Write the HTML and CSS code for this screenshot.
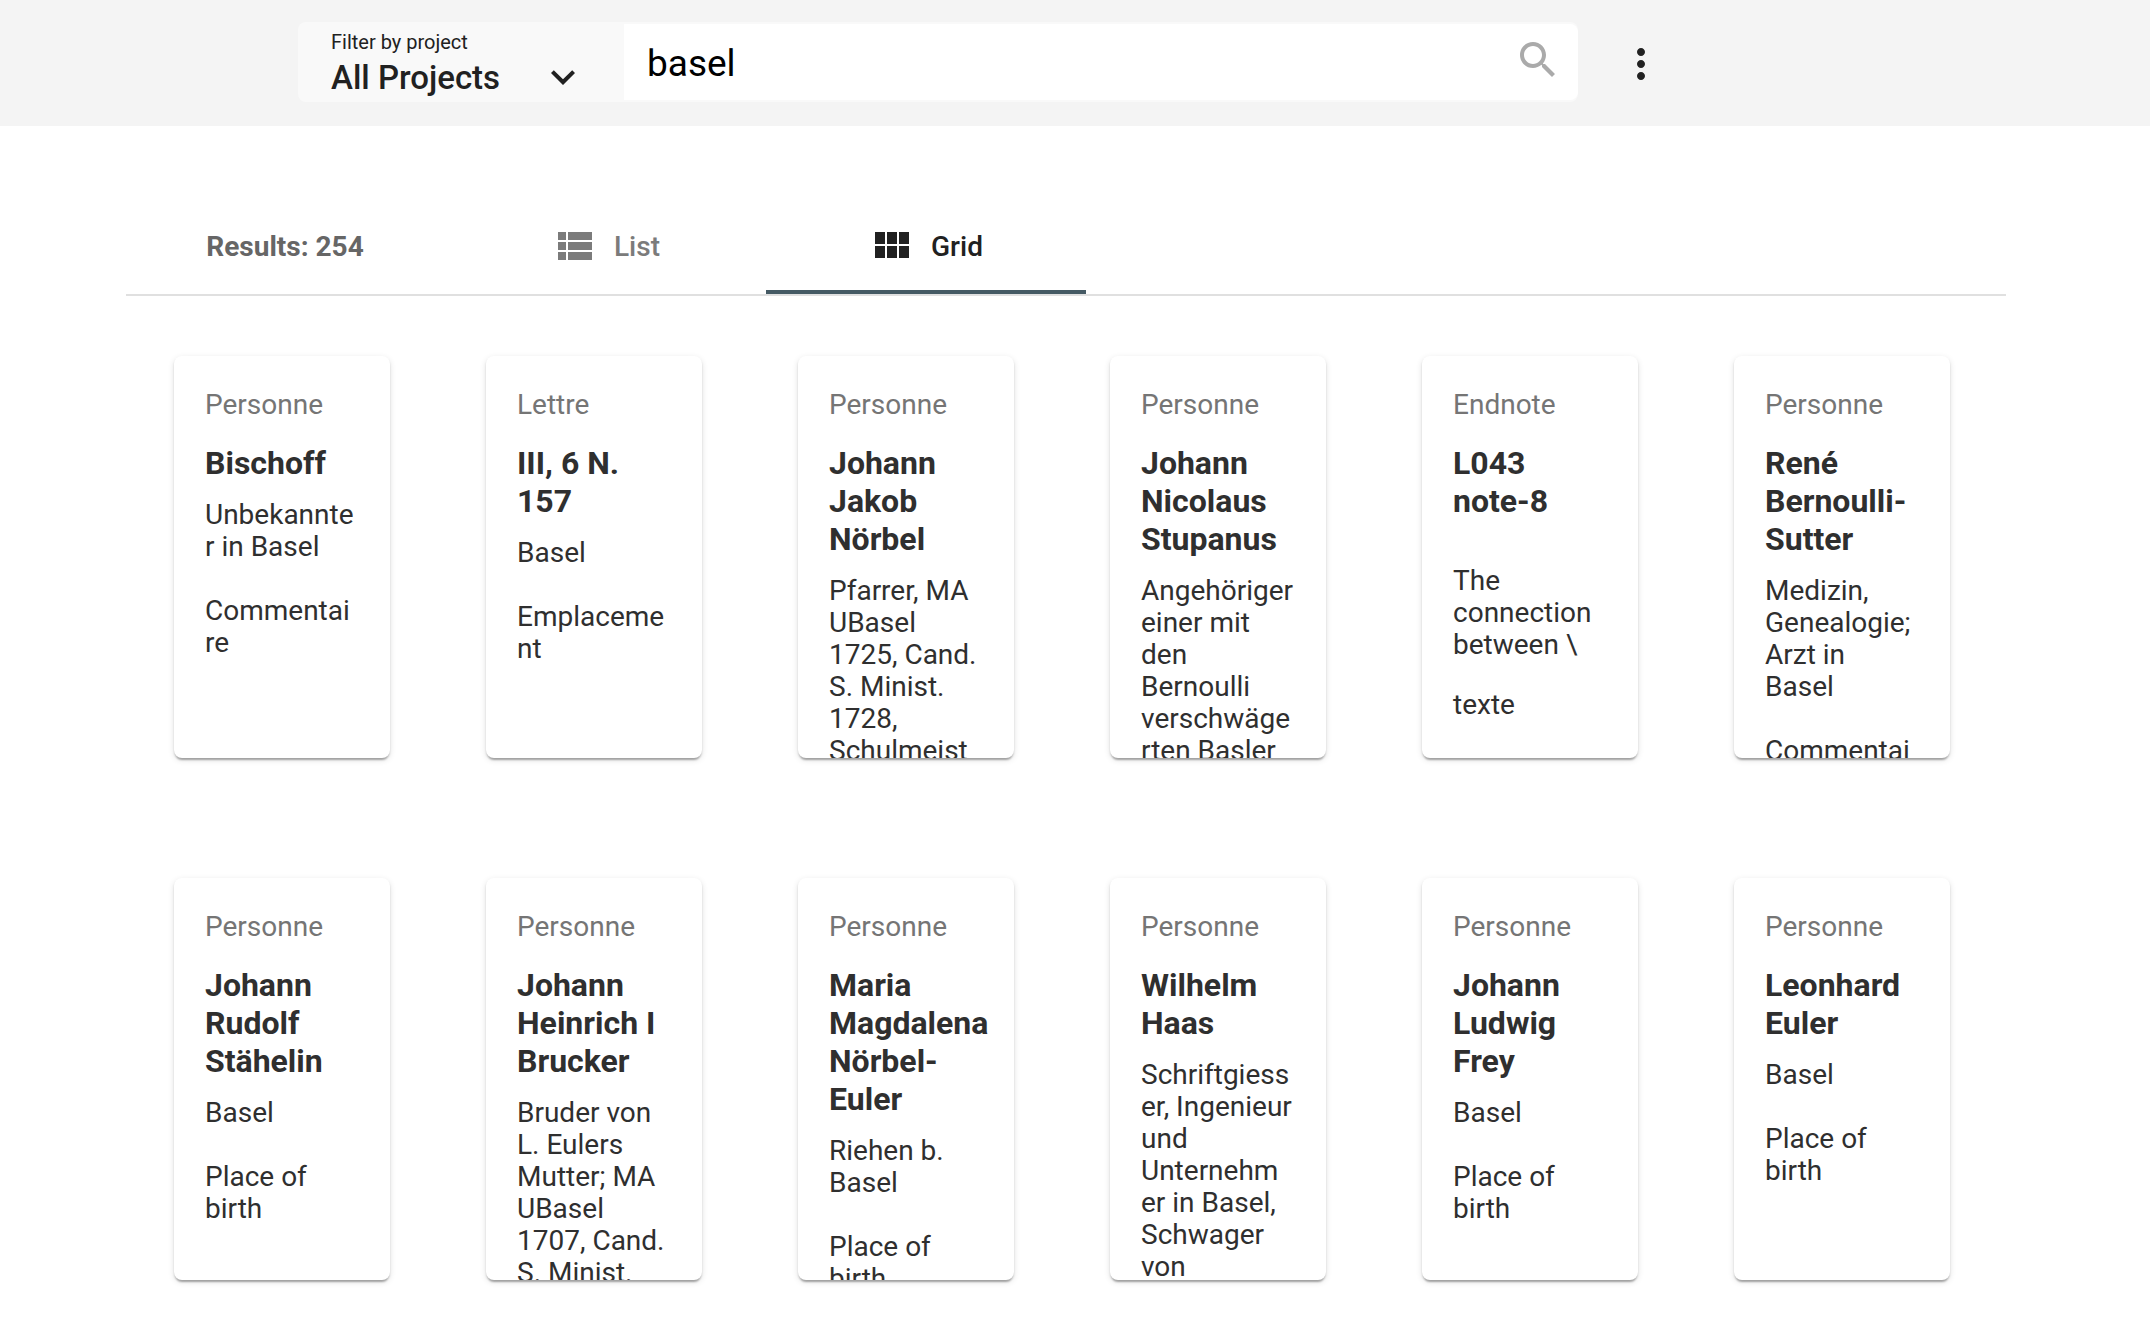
FILE: index.html
```html
<!DOCTYPE html>
<html lang="en">
<head>
<meta charset="utf-8">
<title>Search results</title>
<link rel="stylesheet" href="styles.css">
</head>
<body>
<header class="topbar">
  <form class="search" role="search">
    <div class="filter">
      <label class="filter-label" for="project">Filter by project</label>
      <div class="filter-row">
        <select class="filter-select" id="project"><option>All Projects</option></select>
        <svg class="icon filter-arrow" viewBox="0 0 24 24" aria-hidden="true"><path d="M7.41 8.59L12 13.17l4.59-4.58L18 10l-6 6-6-6z"/></svg>
      </div>
    </div>
    <div class="field">
      <input class="field-input" type="text" value="basel" aria-label="Search">
      <button class="icon-button field-button" type="button" aria-label="Search">
        <svg class="icon" viewBox="0 0 24 24" aria-hidden="true"><path d="M15.5 14h-.79l-.28-.27C15.41 12.59 16 11.11 16 9.5 16 5.91 13.09 3 9.5 3S3 5.91 3 9.5 5.91 16 9.5 16c1.61 0 3.09-.59 4.23-1.57l.27.28v.79l5 4.99L20.49 19l-4.99-5zm-6 0C7.01 14 5 11.99 5 9.5S7.01 5 9.5 5 14 7.01 14 9.5 11.99 14 9.5 14z"/></svg>
      </button>
    </div>
  </form>
  <button class="icon-button menu-button" type="button" aria-label="More options">
    <svg class="icon" viewBox="0 0 24 24" aria-hidden="true"><path d="M12 8c1.1 0 2-.9 2-2s-.9-2-2-2-2 .9-2 2 .9 2 2 2zm0 2c-1.1 0-2 .9-2 2s.9 2 2 2 2-.9 2-2-.9-2-2-2zm0 6c-1.1 0-2 .9-2 2s.9 2 2 2 2-.9 2-2-.9-2-2-2z"/></svg>
  </button>
</header>
<main class="results">
  <div class="tabs" role="tablist">
    <button class="tab tab-count" type="button" role="tab" disabled><span class="tab-label">Results: 254</span></button>
    <button class="tab" type="button" role="tab">
      <svg class="icon" viewBox="0 0 24 24" aria-hidden="true"><path d="M4 14h4v-4H4v4zm0 5h4v-4H4v4zM4 9h4V5H4v4zm5 5h12v-4H9v4zm0 5h12v-4H9v4zM9 5v4h12V5H9z"/></svg>
      <span class="tab-label">List</span>
    </button>
    <button class="tab tab-active" type="button" role="tab" aria-selected="true">
      <svg class="icon" viewBox="0 0 24 24" aria-hidden="true"><path d="M4 11h5V5H4v6zm0 7h5v-6H4v6zm6 0h5v-6h-5v6zm6 0h5v-6h-5v6zm-6-7h5V5h-5v6zm6-6v6h5V5h-5z"/></svg>
      <span class="tab-label">Grid</span>
    </button>
  </div>
  <section class="cards">
    <article class="card">
      <p class="card-type">Personne</p>
      <h2 class="card-title">Bischoff</h2>
      <div class="card-body">Unbekannter in Basel<br><br>Commentaire</div>
    </article>
    <article class="card">
      <p class="card-type">Lettre</p>
      <h2 class="card-title">III, 6 N. 157</h2>
      <div class="card-body">Basel<br><br>Emplacement</div>
    </article>
    <article class="card">
      <p class="card-type">Personne</p>
      <h2 class="card-title">Johann Jakob Nörbel</h2>
      <div class="card-body">Pfarrer, MA UBasel 1725, Cand. S. Minist. 1728, Schulmeister</div>
    </article>
    <article class="card">
      <p class="card-type">Personne</p>
      <h2 class="card-title">Johann Nicolaus Stupanus</h2>
      <div class="card-body">Angehöriger einer mit den Bernoulli verschwägerten Basler</div>
    </article>
    <article class="card">
      <p class="card-type">Endnote</p>
      <h2 class="card-title">L043 note-8</h2>
      <div class="card-body"><p class="card-quote">The connection between \</p>texte</div>
    </article>
    <article class="card">
      <p class="card-type">Personne</p>
      <h2 class="card-title">René Bernoulli-Sutter</h2>
      <div class="card-body">Medizin, Genealogie; Arzt in Basel<br><br>Commentaire</div>
    </article>
    <article class="card">
      <p class="card-type">Personne</p>
      <h2 class="card-title">Johann Rudolf Stähelin</h2>
      <div class="card-body">Basel<br><br>Place of birth</div>
    </article>
    <article class="card">
      <p class="card-type">Personne</p>
      <h2 class="card-title">Johann Heinrich I Brucker</h2>
      <div class="card-body">Bruder von L. Eulers Mutter; MA UBasel 1707, Cand. S. Minist.</div>
    </article>
    <article class="card">
      <p class="card-type">Personne</p>
      <h2 class="card-title">Maria Magdalena Nörbel-Euler</h2>
      <div class="card-body">Riehen b. Basel<br><br>Place of birth</div>
    </article>
    <article class="card">
      <p class="card-type">Personne</p>
      <h2 class="card-title">Wilhelm Haas</h2>
      <div class="card-body">Schriftgiesser, Ingenieur und Unternehm<wbr>er in Basel, Schwager von</div>
    </article>
    <article class="card">
      <p class="card-type">Personne</p>
      <h2 class="card-title">Johann Ludwig Frey</h2>
      <div class="card-body">Basel<br><br>Place of birth</div>
    </article>
    <article class="card">
      <p class="card-type">Personne</p>
      <h2 class="card-title">Leonhard Euler</h2>
      <div class="card-body">Basel<br><br>Place of birth</div>
    </article>
  </section>
</main>
</body>
</html>
```
FILE: styles.css
```css
* {
  box-sizing: border-box;
}

body {
  margin: 0;
  background: #fff;
  color: #2f2f2f;
  font-family: Roboto, "Liberation Sans", sans-serif;
  font-size: 28px;
  line-height: 32px;
}

button,
input,
select {
  margin: 0;
  padding: 0;
  border: 0;
  background: none;
  color: inherit;
  font: inherit;
}

.icon {
  display: block;
  flex: none;
  width: 48px;
  height: 48px;
  fill: currentColor;
}

.icon-button {
  display: flex;
  align-items: center;
  justify-content: center;
}

/* Top bar */
.topbar {
  display: flex;
  align-items: center;
  gap: 24px;
  padding: 22px 298px 24px;
  background: #f4f4f4;
  color: #212121;
}

.search {
  display: flex;
  flex: 1;
  max-width: 1280px;
  height: 80px;
  border-radius: 8px;
  background: #f9f9f9;
}

.filter {
  flex: none;
  width: 326px;
  padding: 9px 37px 0 33px;
}

.filter-label {
  display: block;
  font-size: 20px;
  line-height: 22px;
}

.filter-row {
  display: grid;
  grid-template-columns: 1fr 48px;
  align-items: start;
}

.filter-select {
  grid-area: 1 / 1 / 2 / 3;
  height: 48px;
  padding-top: 2px;
  appearance: none;
  font-size: 33px;
  font-weight: 500;
  line-height: 38px;
}

.filter-arrow {
  grid-area: 1 / 2;
  pointer-events: none;
}

.field {
  display: flex;
  flex: 1;
  margin: 2px 0;
  padding: 0 16px 0 23px;
  border-radius: 0 8px 8px 0;
  background: #fff;
}

.field-input {
  flex: 1;
  min-width: 0;
  padding-top: 2px;
  color: #000;
  font-size: 37px;
  outline: 0;
}

.field-button {
  height: 72px;
  color: #aaa;
}

.menu-button {
  width: 78px;
  height: 80px;
  padding-top: 4px;
}

/* Results */
.results {
  padding: 72px 144px 48px 126px;
}

.tabs {
  display: flex;
  border-bottom: 2px solid #e0e0e0;
}

.tab {
  display: flex;
  align-items: center;
  justify-content: center;
  gap: 16px;
  width: 320px;
  height: 96px;
  padding-right: 2px;
  border-bottom: 4px solid transparent;
  border-top: 4px solid transparent;
  color: #7b7b7b;
  font-weight: 500;
}

.tab-label {
  padding-top: 2px;
}

.tab-count {
  color: #666;
  font-weight: 700;
}

.tab-active {
  border-bottom-color: #455a64;
  color: #212121;
}

.cards {
  display: grid;
  grid-template-columns: repeat(6, 1fr);
  gap: 120px 96px;
  padding: 60px 56px 0 48px;
}

.card {
  height: 402px;
  overflow: hidden;
  padding: 33px 32px 32px 31px;
  border-radius: 8px;
  background: #fff;
  box-shadow: 0 4px 2px -2px rgba(0, 0, 0, 0.2), 0 2px 2px rgba(0, 0, 0, 0.14), 0 2px 6px rgba(0, 0, 0, 0.12);
}

.card-type {
  margin: 0 0 23px;
  color: #757575;
}

.card-title {
  margin: 0 0 17px;
  font-size: 32px;
  font-weight: 700;
  line-height: 38px;
}

.card-body {
  display: flow-root;
  overflow-wrap: break-word;
}

.card-quote {
  margin: 28px 0;
}
```
